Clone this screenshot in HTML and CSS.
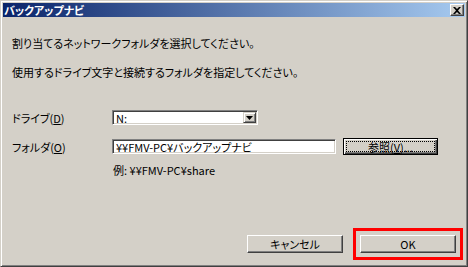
FILE: index.html
```html
<!DOCTYPE html>
<html lang="ja">
<head>
    <meta charset="UTF-8">
    <meta name="viewport" content="width=device-width, initial-scale=1.0">
    <title>バックアップナビ</title>
    <link rel="stylesheet" href="styles.css">
</head>
<body>
    <div class="window">
        <div class="titlebar">
            <span class="title">バックアップナビ</span>
            <span class="close">
                <svg width="8" height="7" viewBox="0 0 8 7">
                    <path d="M0 0h2l2 2 2-2h2L5 3.5 8 7H6L4 5 2 7H0l3-3.5z" fill="#000"/>
                </svg>
            </span>
        </div>
        <div class="content">
            <p class="msg">割り当てるネットワークフォルダを選択してください。</p>
            <p class="msg">使用するドライブ文字と接続するフォルダを指定してください。</p>

            <div class="row drive-row">
                <span class="label">ドライブ(<u>D</u>)</span>
                <div class="field combo">
                    <span class="value">N:</span>
                    <span class="arrow">
                        <svg width="7" height="4" viewBox="0 0 7 4"><path d="M0 0h7L3.5 4z" fill="#000"/></svg>
                    </span>
                </div>
            </div>

            <div class="row folder-row">
                <span class="label">フォルダ(<u>O</u>)</span>
                <div class="field textbox">
                    <span class="value">¥¥FMV-PC¥バックアップナビ</span>
                </div>
                <button class="btn btn-default">参照(<u>V</u>)...</button>
            </div>

            <p class="example">例: ¥¥FMV-PC¥share</p>

            <div class="actions">
                <button class="btn">キャンセル</button>
                <button class="btn btn-ok">OK</button>
            </div>
        </div>
    </div>
</body>
</html>
```

FILE: styles.css
```css
body {
    margin: 0;
    font-family: "Noto Sans CJK JP", sans-serif;
    font-size: 11px;
    font-feature-settings: "palt";
    color: #000;
    background-color: #d4d0c8;
}
.window {
    width: 468px;
    height: 267px;
    box-sizing: border-box;
    border: 1px solid;
    border-color: #d4d0c8 #404040 #404040 #d4d0c8;
    box-shadow: inset 1px 1px #fff, inset -1px -1px #808080;
    padding: 2px;
    display: flex;
    flex-direction: column;
    background-color: #d4d0c8;
}
.titlebar {
    height: 14px;
    background: linear-gradient(to right, #0a246a, #a6caf0);
    display: flex;
    align-items: center;
    justify-content: space-between;
    padding: 0 1px 0 1px;
}
.title {
    color: #fff;
    font-weight: bold;
    font-size: 11px;
    line-height: 14px;
}
.close {
    width: 14px;
    height: 12px;
    box-sizing: border-box;
    border: 1px solid;
    border-color: #fff #404040 #404040 #fff;
    box-shadow: inset -1px -1px #808080;
    background-color: #d4d0c8;
    display: flex;
    align-items: center;
    justify-content: center;
}
.content {
    flex: 1;
    display: flex;
    flex-direction: column;
    padding: 0 9px 11px 9px;
}
.msg {
    margin: 20px 0 0;
    line-height: 12px;
}
.msg + .msg {
    margin-top: 17px;
}
.row {
    display: flex;
    align-items: center;
}
.label {
    width: 100px;
    line-height: 12px;
}
.drive-row {
    margin-top: 32px;
    height: 15px;
}
.folder-row {
    margin-top: 13px;
    height: 17px;
}
.field {
    height: 15px;
    box-sizing: border-box;
    border: 1px solid;
    border-color: #808080 #fff #fff #808080;
    box-shadow: inset 1px 1px #404040, inset -1px -1px #d4d0c8;
    background-color: #fff;
    display: flex;
    align-items: center;
    justify-content: space-between;
    padding: 1px 1px 1px 3px;
}
.value {
    line-height: 12px;
}
.combo {
    width: 146px;
}
.textbox {
    width: 224px;
}
.arrow {
    width: 13px;
    height: 11px;
    box-sizing: border-box;
    border: 1px solid;
    border-color: #d4d0c8 #404040 #404040 #d4d0c8;
    box-shadow: inset 1px 1px #fff, inset -1px -1px #808080;
    background-color: #d4d0c8;
    display: flex;
    align-items: center;
    justify-content: center;
}
.btn {
    font-family: inherit;
    font-size: 11px;
    font-feature-settings: "palt";
    color: #000;
    width: 96px;
    height: 18px;
    padding: 0;
    box-sizing: border-box;
    border: 1px solid;
    border-color: #fff #404040 #404040 #fff;
    box-shadow: inset -1px -1px #808080;
    background-color: #d4d0c8;
    line-height: 12px;
}
.btn-default {
    width: 95px;
    height: 17px;
    margin-left: 7px;
    border-color: #000;
    box-shadow: inset 1px 1px #fff, inset -1px -1px #404040, inset -2px -2px #808080;
    outline: 1px dotted #000;
    outline-offset: -4px;
}
.example {
    margin: 9px 0 0 101px;
    line-height: 12px;
}
.actions {
    margin-top: auto;
    display: flex;
    justify-content: flex-end;
    gap: 17px;
}
.btn-ok {
    outline: 3px solid #f00;
    outline-offset: 4px;
}
```
